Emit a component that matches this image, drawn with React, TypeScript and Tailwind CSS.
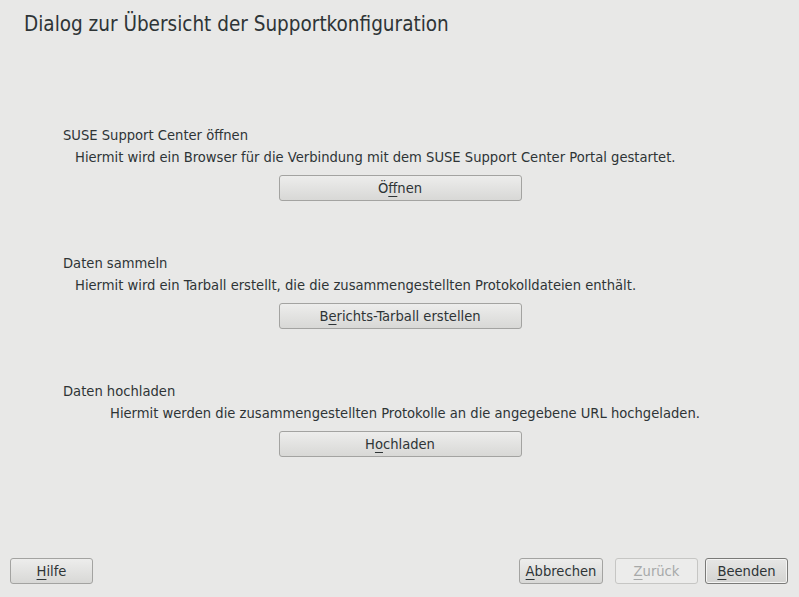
const font = { fontFamily: '"DejaVu Sans Condensed", "DejaVu Sans", sans-serif' };

function Btn({
  pre,
  u,
  post,
  className = '',
  disabled = false,
  focused = false,
}: {
  pre: string;
  u: string;
  post: string;
  className?: string;
  disabled?: boolean;
  focused?: boolean;
}) {
  const base = disabled
    ? 'border-[#c6c6c4] bg-[#ececeb] text-[#a7a9a9]'
    : focused
      ? 'border-[#7a7a78] bg-gradient-to-b from-[#e6e6e5] to-[#d3d3d1] text-[#2e3436] shadow-[inset_0_0_0_1px_#f4f4f3]'
      : 'border-[#a3a3a1] bg-gradient-to-b from-[#ededec] to-[#d8d8d6] text-[#2e3436]';
  return (
    <button
      className={`h-[26px] rounded-[3px] border text-[14.6px] leading-none ${base} ${className}`}
    >
      {pre}
      <span className="underline underline-offset-[3px]">{u}</span>
      {post}
    </button>
  );
}

function Section({
  title,
  desc,
  descIndent,
  btn,
}: {
  title: string;
  desc: string;
  descIndent: string;
  btn: React.ReactNode;
}) {
  return (
    <div className="flex flex-col">
      <div className="pl-[63px] text-[14.6px] leading-[17px] text-[#2e3436]">{title}</div>
      <div className={`mt-[5px] text-[14.6px] leading-[17px] text-[#2e3436] ${descIndent}`}>{desc}</div>
      <div className="mt-[10px] flex justify-center">{btn}</div>
    </div>
  );
}

export default function App() {
  return (
    <div className="flex h-[597px] w-[799px] flex-col bg-[#e8e8e7]" style={font}>
      <h1 className="pl-[24px] pt-[11px] text-[20.5px] leading-[26px] text-[#2e3436]">
        Dialog zur Übersicht der Supportkonfiguration
      </h1>
      <div className="mt-[89px] flex flex-col gap-[53px]">
        <Section
          title="SUSE Support Center öffnen"
          desc="Hiermit wird ein Browser für die Verbindung mit dem SUSE Support Center Portal gestartet."
          descIndent="pl-[75px]"
          btn={<Btn pre="Ö" u="f" post="fnen" className="ml-[1px] w-[243px]" />}
        />
        <Section
          title="Daten sammeln"
          desc="Hiermit wird ein Tarball erstellt, die die zusammengestellten Protokolldateien enthält."
          descIndent="pl-[75px]"
          btn={<Btn pre="B" u="e" post="richts-Tarball erstellen" className="ml-[1px] w-[243px]" />}
        />
        <Section
          title="Daten hochladen"
          desc="Hiermit werden die zusammengestellten Protokolle an die angegebene URL hochgeladen."
          descIndent="pl-[110px]"
          btn={<Btn pre="H" u="o" post="chladen" className="ml-[1px] w-[243px]" />}
        />
      </div>
      <div className="mt-auto flex items-center pb-[13px] pl-[10px] pr-[11px]">
        <Btn pre="" u="H" post="ilfe" className="w-[83px]" />
        <div className="flex-1" />
        <Btn pre="" u="A" post="bbrechen" className="w-[84px]" />
        <Btn pre="" u="Z" post="urück" className="ml-[12px] w-[83px]" disabled />
        <Btn pre="" u="B" post="eenden" className="ml-[7px] w-[83px]" focused />
      </div>
    </div>
  );
}
